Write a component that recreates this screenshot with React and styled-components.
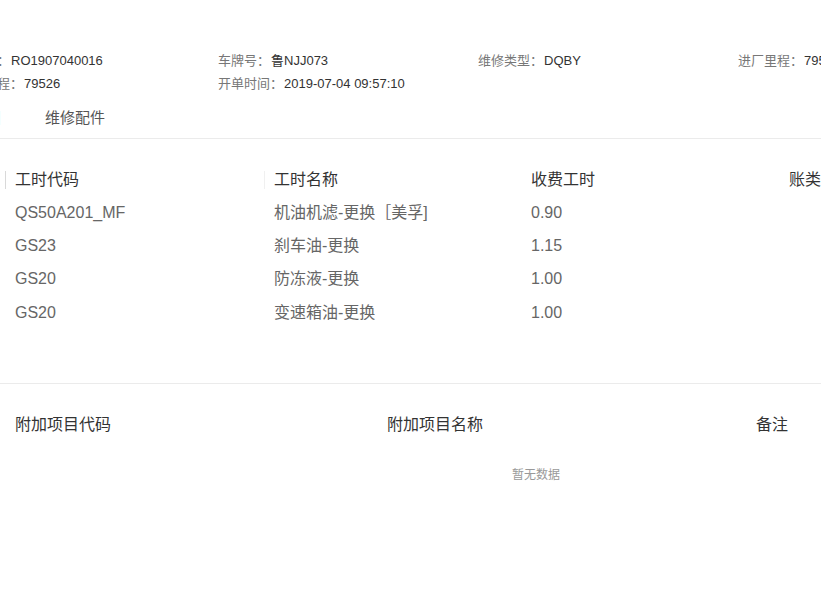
import React from "react";
import styled, { createGlobalStyle } from "styled-components";

const GlobalStyle = createGlobalStyle`
  html, body {
    margin: 0;
    padding: 0;
    background: #fff;
    overflow: hidden;
  }
  body {
    font-family: "Liberation Sans", "Noto Sans CJK SC", sans-serif;
    color: #333;
  }
`;

const info = [
  [
    { label: "工单号：", value: "RO1907040016" },
    { label: "车牌号：", value: "鲁NJJ073" },
    { label: "维修类型：", value: "DQBY" },
    { label: "进厂里程：", value: "79526" },
  ],
  [
    { label: "出厂里程：", value: "79526" },
    { label: "开单时间：", value: "2019-07-04 09:57:10" },
  ],
];

const labourRows = [
  { code: "QS50A201_MF", name: "机油机滤-更换［美孚]", hours: "0.90" },
  { code: "GS23", name: "刹车油-更换", hours: "1.15" },
  { code: "GS20", name: "防冻液-更换", hours: "1.00" },
  { code: "GS20", name: "变速箱油-更换", hours: "1.00" },
];

const App = () => {
  return (
    <>
      <GlobalStyle />
      <Page>
        <InfoGrid>
          {info.map((row, i) =>
            row.map((item) => (
              <InfoItem key={`${i}-${item.label}`}>
                <Label>{item.label}</Label>
                <Value>{item.value}</Value>
              </InfoItem>
            ))
          )}
        </InfoGrid>

        <Tabs>
          <Tab>维修项目</Tab>
          <Tab>维修配件</Tab>
        </Tabs>

        <Table top={24}>
          <HeadRow cols="259px 257px 258px 1fr">
            <HeadCell divider="#d9d9d9">工时代码</HeadCell>
            <HeadCell divider="#f0f0f0">工时名称</HeadCell>
            <HeadCell>收费工时</HeadCell>
            <HeadCell>账类</HeadCell>
          </HeadRow>
          {labourRows.map((row, i) => (
            <BodyRow key={i} cols="259px 257px 258px 1fr">
              <BodyCell>{row.code}</BodyCell>
              <BodyCell>{row.name}</BodyCell>
              <BodyCell>{row.hours}</BodyCell>
              <BodyCell />
            </BodyRow>
          ))}
        </Table>

        <Divider />

        <Table top={25}>
          <HeadRow cols="372px 369px 1fr">
            <HeadCell>附加项目代码</HeadCell>
            <HeadCell>附加项目名称</HeadCell>
            <HeadCell>备注</HeadCell>
          </HeadRow>
          <Empty>暂无数据</Empty>
        </Table>
      </Page>
    </>
  );
};

const Page = styled.div`
  margin-left: -58px;
  width: 1200px;
  padding-top: 49px;
`;

const InfoGrid = styled.div`
  display: grid;
  grid-template-columns: repeat(4, 260px);
  padding-left: 16px;
  font-size: 13px;
  line-height: 23px;
`;

const InfoItem = styled.div`
  display: flex;
  white-space: nowrap;
`;

const Label = styled.span`
  color: #777;
`;

const Value = styled.span`
  color: #333;
  margin-left: 1px;
`;

const Tabs = styled.div`
  display: flex;
  gap: 43px;
  margin-top: 13px;
  padding-bottom: 10px;
  border-bottom: 1px solid #ebebeb;
`;

const Tab = styled.div`
  font-size: 15px;
  line-height: 20px;
  color: #555;
`;

const Table = styled.div`
  margin-left: 63px;
  width: 1062px;
  margin-top: ${(p) => p.top}px;
`;

const HeadRow = styled.div`
  display: grid;
  grid-template-columns: ${(p) => p.cols};
  height: 33px;
  align-items: center;
`;

const HeadCell = styled.div`
  position: relative;
  padding-left: 10px;
  font-size: 16px;
  line-height: 20px;
  color: #333;
  white-space: nowrap;

  &::before {
    content: "";
    display: ${(p) => (p.divider ? "block" : "none")};
    position: absolute;
    left: 0;
    top: 1px;
    width: 1px;
    height: 18px;
    background: ${(p) => p.divider};
  }
`;

const BodyRow = styled(HeadRow)`
  height: 33.4px;
`;

const BodyCell = styled.div`
  padding-left: 10px;
  font-size: 16px;
  line-height: 20px;
  color: #666;
  white-space: nowrap;
`;

const Divider = styled.div`
  margin-top: 53px;
  height: 1px;
  background: #ebebeb;
`;

const Empty = styled.div`
  padding-top: 23px;
  text-align: center;
  font-size: 12px;
  line-height: 20px;
  color: #999;
`;

export default App;
